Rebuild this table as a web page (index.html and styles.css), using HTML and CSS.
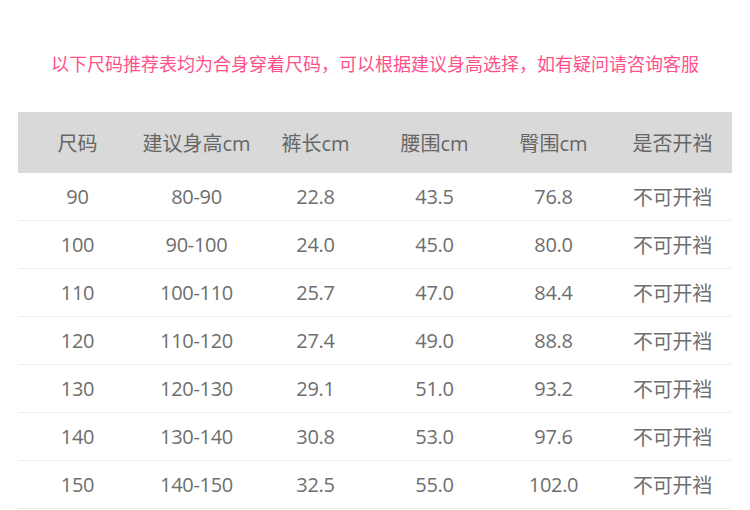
FILE: index.html
```html
<!DOCTYPE html>
<html lang="zh-CN">
<head>
<meta charset="utf-8">
<link rel="stylesheet" href="styles.css">
</head>
<body>
<p class="title">以下尺码推荐表均为合身穿着尺码，可以根据建议身高选择，如有疑问请咨询客服</p>
<table class="size-table">
  <thead>
    <tr><th>尺码</th><th>建议身高cm</th><th>裤长cm</th><th>腰围cm</th><th>臀围cm</th><th>是否开裆</th></tr>
  </thead>
  <tbody>
    <tr><td>90</td><td>80-90</td><td>22.8</td><td>43.5</td><td>76.8</td><td>不可开裆</td></tr>
    <tr><td>100</td><td>90-100</td><td>24.0</td><td>45.0</td><td>80.0</td><td>不可开裆</td></tr>
    <tr><td>110</td><td>100-110</td><td>25.7</td><td>47.0</td><td>84.4</td><td>不可开裆</td></tr>
    <tr><td>120</td><td>110-120</td><td>27.4</td><td>49.0</td><td>88.8</td><td>不可开裆</td></tr>
    <tr><td>130</td><td>120-130</td><td>29.1</td><td>51.0</td><td>93.2</td><td>不可开裆</td></tr>
    <tr><td>140</td><td>130-140</td><td>30.8</td><td>53.0</td><td>97.6</td><td>不可开裆</td></tr>
    <tr><td>150</td><td>140-150</td><td>32.5</td><td>55.0</td><td>102.0</td><td>不可开裆</td></tr>
  </tbody>
</table>
</body>
</html>
```
FILE: styles.css
```css
html, body {
  margin: 0;
  padding: 0;
  background: #ffffff;
}
body {
  width: 750px;
  font-family: "Open Sans", "Noto Sans CJK SC", sans-serif;
  color: #6b6b6b;
}
.title {
  margin: 0;
  padding-top: 51px;
  font-family: "Noto Sans CJK SC", sans-serif;
  font-size: 18px;
  line-height: 24px;
  text-align: center;
  color: #ff5189;
}
.size-table {
  margin: 37px 18px 0;
  width: 714px;
  border-collapse: collapse;
  table-layout: fixed;
  font-size: 20px;
}
.size-table th {
  height: 61px;
  padding: 0;
  background: #d9d9d9;
  font-weight: normal;
  color: #666666;
  text-align: center;
}
.size-table td {
  height: 47px;
  padding: 0;
  text-align: center;
  border-bottom: 1px solid #eeeeee;
  color: #6e6e6e;
  letter-spacing: -0.3px;
}
```
